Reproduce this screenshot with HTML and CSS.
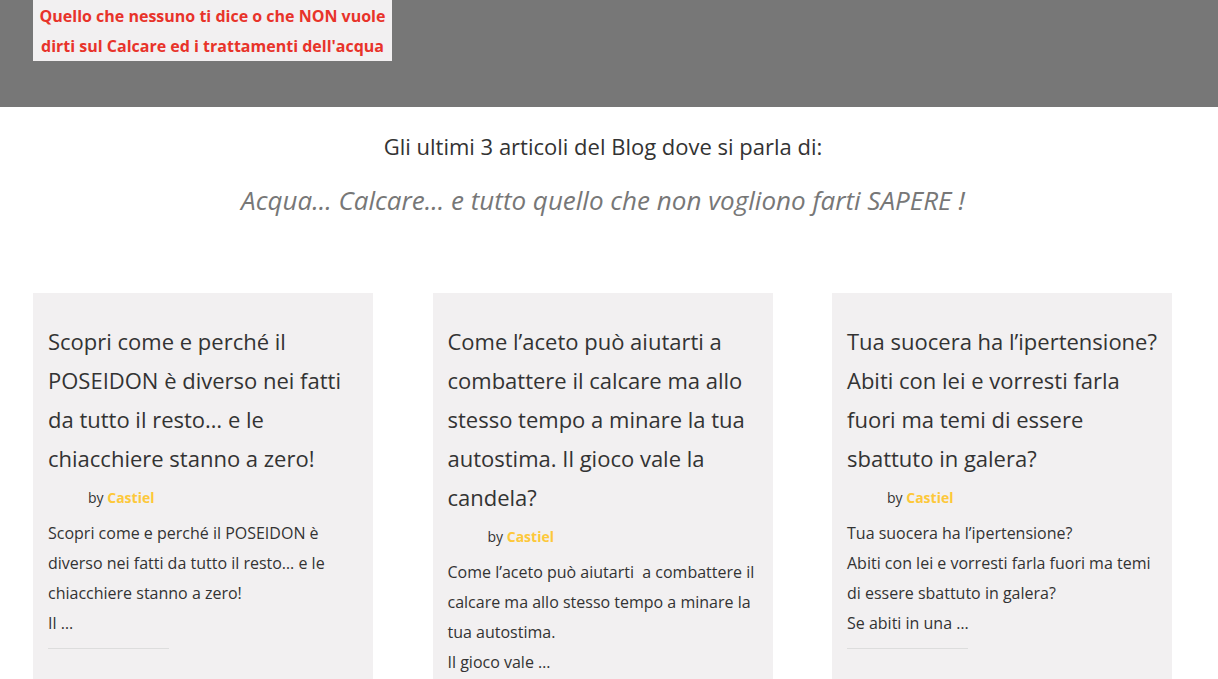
FILE: index.html
```html
<!DOCTYPE html>
<html lang="it">
<head>
<meta charset="utf-8">
<title>Blog - Calcare</title>
<link rel="stylesheet" href="styles.css">
</head>
<body>
<header class="hero">
  <div class="hero-note">
    <p>Quello che nessuno ti dice o che NON vuole<br>dirti sul Calcare ed i trattamenti dell'acqua</p>
  </div>
</header>

<section class="intro">
  <h2 class="intro-title">Gli ultimi 3 articoli del Blog dove si parla di:</h2>
  <p class="intro-sub">Acqua... Calcare... e tutto quello che non vogliono farti SAPERE !</p>
</section>

<section class="posts">
  <article class="post">
    <h3 class="post-title">Scopri come e perché il POSEIDON è diverso nei fatti da tutto il resto… e le chiacchiere stanno a zero!</h3>
    <div class="post-meta">by <a class="author" href="#">Castiel</a></div>
    <p class="post-excerpt">Scopri come e perché il POSEIDON è diverso nei fatti da tutto il resto… e le chiacchiere stanno a zero!<br>Il …</p>
    <hr class="post-rule">
  </article>
  <article class="post">
    <h3 class="post-title">Come l’aceto può aiutarti a combattere il calcare ma allo stesso tempo a minare la tua autostima. Il gioco vale la candela?</h3>
    <div class="post-meta">by <a class="author" href="#">Castiel</a></div>
    <p class="post-excerpt">Come l’aceto può aiutarti&nbsp; a combattere il calcare ma allo stesso tempo a minare la tua autostima.<br>Il gioco vale …</p>
    <hr class="post-rule">
  </article>
  <article class="post">
    <h3 class="post-title">Tua suocera ha l’ipertensione? Abiti con lei e vorresti farla fuori ma temi di essere sbattuto in galera?</h3>
    <div class="post-meta">by <a class="author" href="#">Castiel</a></div>
    <p class="post-excerpt">Tua suocera ha l’ipertensione?<br>Abiti con lei e vorresti farla fuori ma temi di essere sbattuto in galera?<br>Se abiti in una …</p>
    <hr class="post-rule">
  </article>
</section>
</body>
</html>
```

FILE: styles.css
```css
* {
  box-sizing: border-box;
}

html, body {
  margin: 0;
  padding: 0;
  background: #ffffff;
  font-family: "Open Sans", "Noto Sans", "Liberation Sans", sans-serif;
  color: #333333;
  overflow: hidden;
}

/* grey banner on top */
.hero {
  background: #777777;
  height: 107px;
  padding-left: 33px;
}

.hero-note {
  display: inline-block;
  width: 359px;
  height: 61px;
  background: #f2f0f1;
  padding-top: 1px;
}

.hero-note p {
  margin: 0;
  text-align: center;
  color: #e8332a;
  font-weight: 700;
  font-size: 16px;
  line-height: 30px;
}

/* headline block */
.intro {
  text-align: center;
  padding-top: 24px;
  padding-right: 12px;
}

.intro-title {
  margin: 0;
  font-weight: 400;
  font-size: 22px;
  line-height: 30px;
  color: #333333;
}

.intro-sub {
  margin: 21px 0 0;
  font-style: italic;
  font-weight: 400;
  font-size: 26px;
  line-height: 36px;
  color: #777777;
}

/* three article cards */
.posts {
  display: grid;
  grid-template-columns: repeat(3, 340px);
  column-gap: 59.5px;
  margin-top: 75px;
  padding-left: 33px;
}

.post {
  background: #f2f0f1;
  padding: 29px 15px 30px;
}

.post-title {
  margin: 0;
  font-weight: 400;
  font-size: 22px;
  line-height: 39px;
  color: #333333;
}

.post-meta {
  margin-top: 10px;
  padding-left: 40px;
  font-size: 14px;
  line-height: 20px;
  color: #333333;
}

.author {
  color: #fdc83a;
  font-weight: 700;
  text-decoration: none;
}

.post-excerpt {
  margin: 10px 0 0;
  font-size: 16px;
  line-height: 30px;
  color: #333333;
}

.post-rule {
  width: 121px;
  margin: 10px 0 0;
  border: 0;
  border-top: 1px solid #dddddd;
}
```
